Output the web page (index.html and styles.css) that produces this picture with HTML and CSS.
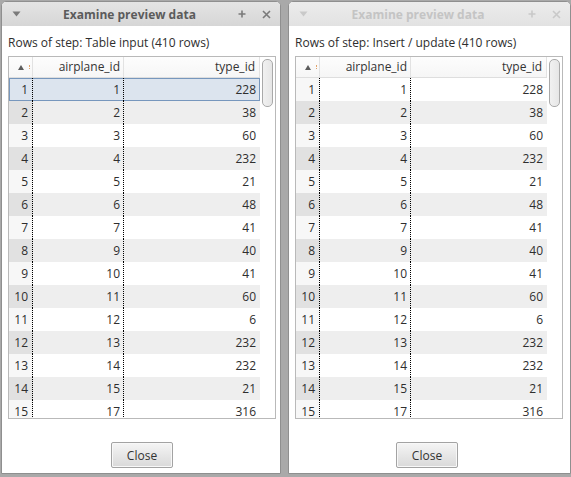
FILE: index.html
```html
<!DOCTYPE html>
<html>
<head>
<meta charset="utf-8">
<link rel="stylesheet" href="styles.css">
</head>
<body>
<div class="desk">
  <div class="win win-left active">
    <div class="titlebar">
      <div class="tb-menu"><svg width="9" height="6" viewBox="0 0 9 6"><path d="M0.5 0.5 L8.5 0.5 L4.5 5.5 Z" fill="currentColor"/></svg></div>
      <div class="tb-title">Examine preview data</div>
      <div class="tb-btns">
        <svg width="8" height="8" viewBox="0 0 8 8"><path d="M4 0.5 V7.5 M0.5 4 H7.5" stroke="currentColor" stroke-width="1.6" fill="none"/></svg>
        <svg width="9" height="9" viewBox="0 0 9 9"><path d="M1 1 L8 8 M8 1 L1 8" stroke="currentColor" stroke-width="1.6" fill="none"/></svg>
      </div>
    </div>
    <div class="body">
      <div class="label">Rows of step: Table input (410 rows)</div>
      <div class="table">
        <div class="grid" id="g1">
          <div class="row head">
            <div class="c rn"><span class="sort"></span><span class="focus"></span></div>
            <div class="c">airplane_id</div>
            <div class="c last">type_id</div>
          </div>
        </div>
        <div class="scroll"><div class="thumb"></div></div>
      </div>
      <div class="foot"><button class="btn">Close</button></div>
    </div>
  </div>
  <div class="win win-right inactive">
    <div class="titlebar">
      <div class="tb-menu"><svg width="9" height="6" viewBox="0 0 9 6"><path d="M0.5 0.5 L8.5 0.5 L4.5 5.5 Z" fill="currentColor"/></svg></div>
      <div class="tb-title">Examine preview data</div>
      <div class="tb-btns">
        <svg width="8" height="8" viewBox="0 0 8 8"><path d="M4 0.5 V7.5 M0.5 4 H7.5" stroke="currentColor" stroke-width="1.6" fill="none"/></svg>
        <svg width="9" height="9" viewBox="0 0 9 9"><path d="M1 1 L8 8 M8 1 L1 8" stroke="currentColor" stroke-width="1.6" fill="none"/></svg>
      </div>
    </div>
    <div class="body">
      <div class="label">Rows of step: Insert / update (410 rows)</div>
      <div class="table">
        <div class="grid" id="g2">
          <div class="row head">
            <div class="c rn"><span class="sort"></span><span class="focus"></span></div>
            <div class="c">airplane_id</div>
            <div class="c last">type_id</div>
          </div>
        </div>
        <div class="scroll"><div class="thumb"></div></div>
      </div>
      <div class="foot"><button class="btn">Close</button></div>
    </div>
  </div>
</div>
<script>
var data = [[1,228],[2,38],[3,60],[4,232],[5,21],[6,48],[7,41],[9,40],[10,41],[11,60],[12,6],[13,232],[14,232],[15,21],[17,316]];
['g1','g2'].forEach(function(id, gi){
  var g = document.getElementById(id);
  data.forEach(function(d, i){
    var r = document.createElement('div');
    r.className = 'row' + (i % 2 ? ' even' : ' odd') + (gi === 0 && i === 0 ? ' sel' : '');
    r.innerHTML = '<div class="c rn">' + (i+1) + '</div><div class="c dot">' + d[0] + '</div><div class="c last">' + d[1] + '</div>';
    g.appendChild(r);
  });
});
</script>
</body>
</html>
```

FILE: styles.css
```css
html, body {
  margin: 0;
  padding: 0;
}
body {
  background: #a9a9a9;
  width: 571px;
  height: 477px;
  overflow: hidden;
  font-family: "Open Sans", "Noto Sans", sans-serif;
  font-size: 12px;
  color: #2e2e2e;
}
.desk {
  display: flex;
  gap: 7px;
  padding: 1px 0 0 1px;
}
.win {
  box-sizing: border-box;
  height: 473px;
  background: #fff;
  border: 1px solid #8f8f8f;
  border-radius: 5px 5px 0 0;
  display: flex;
  flex-direction: column;
  overflow: hidden;
}
.win-left { width: 280px; }
.win-right { width: 283px; }
.titlebar {
  height: 24px;
  flex: none;
  display: flex;
  align-items: center;
  background: linear-gradient(#e4e4e4, #d6d6d6);
  color: #7a7a7a;
}
.inactive .titlebar {
  background: linear-gradient(#ececec, #e2e2e2);
  color: #c9c9c9;
}
.tb-menu {
  width: 26px;
  display: flex;
  justify-content: center;
  padding-left: 1px;
}
.tb-menu svg { display: block; }
.tb-title {
  flex: 1;
  text-align: center;
  font-weight: bold;
  font-size: 12px;
  color: #5b5b5b;
}
.inactive .tb-title { color: #c4c4c4; }
.tb-btns {
  width: 50px;
  display: flex;
  align-items: center;
  gap: 16px;
  padding-left: 8px;
  box-sizing: border-box;
}
.tb-btns svg { display: block; }
.body {
  flex: 1;
  display: flex;
  flex-direction: column;
  padding: 0 4px 0 6px;
}
.win-right .body { padding: 0 6px 0 6px; }
.label {
  padding-top: 9px;
  line-height: 16px;
  height: 16px;
  margin-bottom: 5px;
  white-space: nowrap;
}
.table {
  height: 363px;
  box-sizing: border-box;
  border: 1px solid #b9b9b9;
  display: flex;
  overflow: hidden;
  width: 268px;
}
.grid {
  flex: 1;
  display: flex;
  flex-direction: column;
}
.row {
  display: grid;
  grid-template-columns: 24px 91px 1fr;
  height: 23px;
  box-sizing: border-box;
  flex: none;
}
.row .c {
  line-height: 23px;
  text-align: right;
  padding-right: 3px;
  white-space: nowrap;
}
.row .c.rn {
  text-align: right;
  padding-right: 4px;
  border-right: 1px dotted #000;
}
.row .c.dot { border-right: 1px dotted #000; }
.row .c.last { padding-right: 4px; }
.odd { background: #fff; }
.odd .rn { background: #f7f7f7; }
.even { background: #eeeeee; }
.even .rn { background: #e1e1e1; }
.row.sel {
  background: #dce4ee;
  box-shadow: inset 0 0 0 1px #7797bd;
}
.row.sel .rn { background: transparent; }
.row.head {
  height: 21px;
  background: linear-gradient(#fdfdfd, #f6f6f6);
  border-bottom: 1px solid #dedede;
}
.row.head .c {
  line-height: 20px;
  border-right: 1px solid #e2e2e2;
  color: #333;
}
.row.head .c.rn {
  display: flex;
  align-items: center;
  justify-content: flex-start;
  padding-left: 9px;
  box-sizing: border-box;
}
.row.head .c.last { border-right: 1px solid #e2e2e2; }
.sort {
  width: 0;
  height: 0;
  border-left: 3.5px solid transparent;
  border-right: 3.5px solid transparent;
  border-bottom: 5px solid #5c5c5c;
}
.focus {
  width: 0;
  height: 4px;
  margin-left: 5px;
  border-left: 1px dotted #e2a36a;
}
.scroll {
  width: 15px;
  flex: none;
  background: #fff;
  padding: 2px 0 0 2px;
  box-sizing: border-box;
}
.thumb {
  width: 11px;
  height: 48px;
  box-sizing: border-box;
  border: 1px solid #a9a9a9;
  border-radius: 5px;
  background: linear-gradient(90deg, #f1f1f1, #e6e6e6);
}
.foot {
  display: flex;
  justify-content: center;
  padding-top: 23px;
}
.win-right .foot { padding-right: 5px; }
.btn {
  width: 62px;
  height: 26px;
  box-sizing: border-box;
  border: 1px solid #a3a3a3;
  border-radius: 2px;
  background: linear-gradient(#f5f5f5, #d9d9d9);
  box-shadow: inset 0 0 0 1px #f8f8f8;
  font-family: "Open Sans", "Noto Sans", sans-serif;
  font-size: 12px;
  color: #333;
  padding: 0;
}
```
